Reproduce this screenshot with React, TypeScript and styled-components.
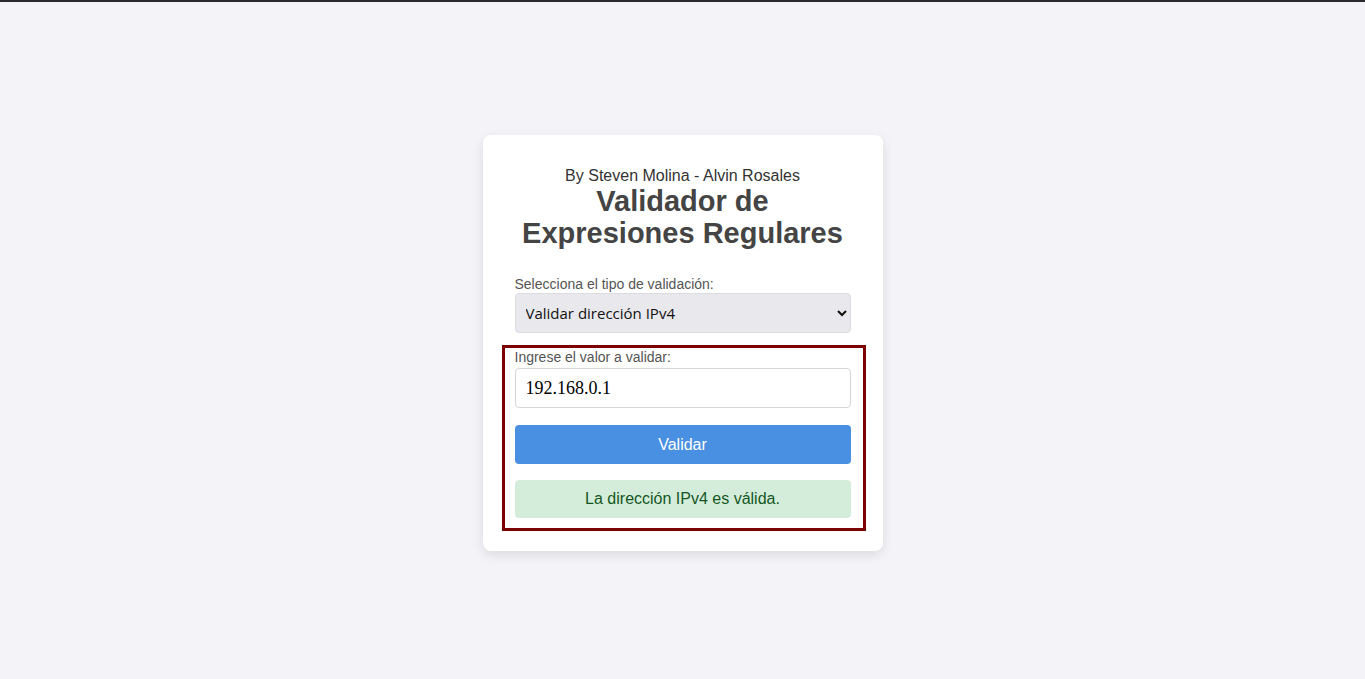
import React, { useState } from "react";
import styled, { createGlobalStyle } from "styled-components";

const Global = createGlobalStyle`
  html, body { margin: 0; padding: 0; }
  body {
    background: #f4f4f8;
    font-family: "Liberation Sans", Arial, sans-serif;
    min-height: 679px;
  }
`;

const TopLine = styled.div`
  height: 2px;
  background: #2a2a2e;
`;

const Page = styled.main`
  display: flex;
  justify-content: center;
  padding-top: 133px;
`;

const Card = styled.section`
  width: 400px;
  box-sizing: border-box;
  background: #ffffff;
  border-radius: 8px;
  padding: 32px;
  box-shadow: 0 4px 12px rgba(0, 0, 0, 0.1);
  display: flex;
  flex-direction: column;
`;

const Byline = styled.p`
  margin: 0;
  text-align: center;
  font-size: 16px;
  line-height: 18px;
  color: #333;
`;

const Title = styled.h1`
  margin: 0 0 27px;
  text-align: center;
  font-size: 29px;
  line-height: 32px;
  font-weight: 700;
  color: #444;
`;

const Label = styled.label`
  display: block;
  font-size: 14px;
  line-height: 16px;
  color: #555;
  margin-bottom: 1px;
`;

const Select = styled.select`
  width: 100%;
  height: 40px;
  box-sizing: border-box;
  border: 1px solid #dcdce0;
  border-radius: 4px;
  background: #e9e9ed;
  padding: 0 8px 0 6px;
  font-family: "Open Sans", "Noto Sans", sans-serif;
  font-size: 15px;
  color: #111;
`;

const Highlight = styled.div`
  margin: 12px -15px -12px -13px;
  border: 3px solid #7d0000;
  padding: 1px 12px 10px 10px;
  display: flex;
  flex-direction: column;
`;

const Input = styled.input`
  margin-top: 2px;
  width: 100%;
  height: 40px;
  box-sizing: border-box;
  border: 1px solid #d6d6d6;
  border-radius: 4px;
  padding: 0 10px;
  font-family: "Liberation Serif", "Times New Roman", serif;
  font-size: 18px;
  color: #000;
  background: #fff;
`;

const Button = styled.button`
  margin-top: 17px;
  height: 39px;
  border: none;
  border-radius: 4px;
  background: #4a90e2;
  color: #fff;
  font-family: "Liberation Sans", Arial, sans-serif;
  font-size: 16px;
  cursor: pointer;
`;

const Result = styled.div<{ $ok: boolean }>`
  margin-top: 16px;
  height: 38px;
  border-radius: 4px;
  display: flex;
  align-items: center;
  justify-content: center;
  font-size: 16px;
  background: ${(p) => (p.$ok ? "#d4edda" : "#f8d7da")};
  color: ${(p) => (p.$ok ? "#155724" : "#721c24")};
`;

export default function App() {
  const [type, setType] = useState("ipv4");
  const [value, setValue] = useState("192.168.0.1");
  return (
    <>
      <Global />
      <TopLine />
      <Page>
        <Card>
          <Byline>By Steven Molina - Alvin Rosales</Byline>
          <Title>
            Validador de
            <br />
            Expresiones Regulares
          </Title>
          <Label htmlFor="tipo">Selecciona el tipo de validación:</Label>
          <Select id="tipo" value={type} onChange={(e) => setType(e.target.value)}>
            <option value="ipv4">Validar dirección IPv4</option>
            <option value="email">Validar correo electrónico</option>
          </Select>
          <Highlight>
            <Label htmlFor="valor">Ingrese el valor a validar:</Label>
            <Input id="valor" value={value} onChange={(e) => setValue(e.target.value)} />
            <Button>Validar</Button>
            <Result $ok={true}>La dirección IPv4 es válida.</Result>
          </Highlight>
        </Card>
      </Page>
    </>
  );
}
